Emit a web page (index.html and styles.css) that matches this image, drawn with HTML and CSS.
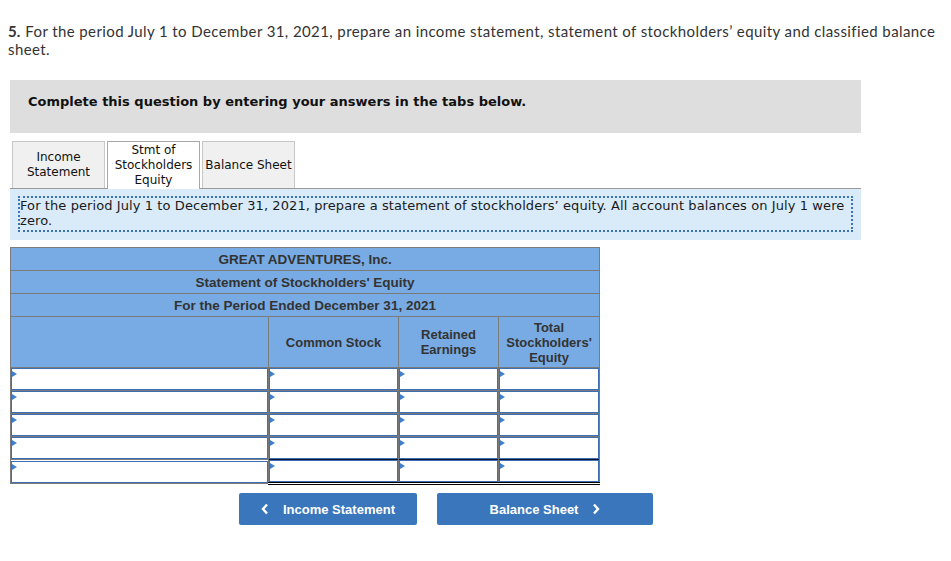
FILE: index.html
```html
<!DOCTYPE html>
<html>
<head>
<meta charset="utf-8">
<link rel="stylesheet" href="styles.css">
</head>
<body>
<div class="page">
  <p class="question"><b class="qnum">5.</b><span>For the period July 1 to December 31, 2021, prepare an income statement, statement of stockholders’ equity and classified balance</span> <span>sheet.</span></p>

  <div class="instruct">Complete this question by entering your answers in the tabs below.</div>

  <div class="tabbar">
    <div class="tab">Income<br>Statement</div>
    <div class="tab active">Stmt of<br>Stockholders<br>Equity</div>
    <div class="tab">Balance Sheet</div>
  </div>

  <div class="panel">
    <div class="prompt">For the period July 1 to December 31, 2021, prepare a statement of stockholders’ equity. All account balances on July 1 were zero.</div>
  </div>

  <table class="sheet">
    <colgroup>
      <col class="c1"><col class="c2"><col class="c3"><col class="c4">
    </colgroup>
    <tr class="title"><td colspan="4">GREAT ADVENTURES, Inc.</td></tr>
    <tr class="title"><td colspan="4">Statement of Stockholders' Equity</td></tr>
    <tr class="title"><td colspan="4">For the Period Ended December 31, 2021</td></tr>
    <tr class="colhead">
      <td></td>
      <td>Common Stock</td>
      <td>Retained<br>Earnings</td>
      <td>Total<br>Stockholders'<br>Equity</td>
    </tr>
    <tr class="row"><td><div class="in"></div></td><td><div class="in"></div></td><td><div class="in"></div></td><td><div class="in"></div></td></tr>
    <tr class="row"><td><div class="in"></div></td><td><div class="in"></div></td><td><div class="in"></div></td><td><div class="in"></div></td></tr>
    <tr class="row"><td><div class="in"></div></td><td><div class="in"></div></td><td><div class="in"></div></td><td><div class="in"></div></td></tr>
    <tr class="row"><td><div class="in"></div></td><td><div class="in"></div></td><td><div class="in"></div></td><td><div class="in"></div></td></tr>
    <tr class="row last"><td><div class="in"></div></td><td class="tot"><div class="in"></div></td><td class="tot"><div class="in"></div></td><td class="tot"><div class="in"></div></td></tr>
  </table>

  <div class="nav">
    <button class="btn prev"><svg width="8" height="12" viewBox="0 0 8 12"><polyline points="6,1.5 2,6 6,10.5" fill="none" stroke="#fff" stroke-width="2.4"/></svg><span>Income Statement</span></button>
    <button class="btn next"><span>Balance Sheet</span><svg width="8" height="12" viewBox="0 0 8 12"><polyline points="2,1.5 6,6 2,10.5" fill="none" stroke="#fff" stroke-width="2.4"/></svg></button>
  </div>
</div>
</body>
</html>
```

FILE: styles.css
```css
html, body {
  margin: 0;
  padding: 0;
  background: #fff;
}

.page {
  padding: 22px 8px 0 8px;
}

.question {
  margin: 0;
  font-family: "Lato", "Open Sans", sans-serif;
  font-size: 15px;
  line-height: 18px;
  letter-spacing: 0.4px;
  color: #333;
}

.qnum {
  font-weight: 700;
  letter-spacing: 0;
  margin-right: 5px;
}

.instruct {
  margin: 22px 0 0 2px;
  width: 851px;
  height: 53px;
  box-sizing: border-box;
  padding: 14px 18px 0 18px;
  background: #dedede;
  font-family: "DejaVu Sans", Verdana, sans-serif;
  font-weight: bold;
  font-size: 13px;
  line-height: 16px;
  color: #111;
}

.tabbar {
  margin: 8px 0 0 2px;
  width: 851px;
  padding-left: 2px;
  box-sizing: border-box;
  display: flex;
  gap: 2px;
  align-items: flex-start;
  border-bottom: 1px solid #9a9a9a;
  height: 48px;
}

.tab {
  width: 93px;
  height: 47px;
  box-sizing: border-box;
  border: 1px solid #c8c8c8;
  border-bottom: none;
  background: #f0f0f0;
  font-family: "DejaVu Sans", Verdana, sans-serif;
  font-size: 12px;
  line-height: 15px;
  color: #111;
  text-align: center;
  display: flex;
  align-items: center;
  justify-content: center;
}

.tab.active {
  height: 48px;
  background: #fff;
  border-color: #a8a8a8;
  position: relative;
  z-index: 1;
}

.panel {
  margin-left: 2px;
  width: 851px;
  box-sizing: border-box;
  background: #d9ebf9;
  padding: 7px 8px 8px 8px;
}

.prompt {
  border: 2px dotted #3b73b9;
  padding: 0 0 2px 0;
  font-family: "DejaVu Sans", Verdana, sans-serif;
  font-size: 13px;
  line-height: 15px;
  letter-spacing: 0.09px;
  color: #1a1a1a;
}

.sheet {
  margin: 7px 0 0 2px;
  border-collapse: collapse;
  table-layout: fixed;
  width: 589px;
  font-family: "Liberation Sans", Arial, sans-serif;
  font-size: 13px;
  font-weight: bold;
  color: #333;
}

.sheet col.c1 { width: 258px; }
.sheet col.c2 { width: 130px; }
.sheet col.c3 { width: 100px; }
.sheet col.c4 { width: 101px; }

.sheet td {
  border: 1px solid #7b7b7b;
  padding: 0;
  text-align: center;
}

.sheet tr.title td {
  background: #78abe3;
  height: 22px;
  font-size: 13.5px;
}

.sheet tr.colhead td {
  background: #78abe3;
  height: 50px;
  line-height: 15px;
}

.sheet tr.row td {
  background: #fff;
}

.in {
  position: relative;
  height: 20px;
  border: 1px solid #3c70b2;
  background: #fff;
}

.in::before {
  content: "";
  position: absolute;
  left: 0;
  top: 2px;
  border-left: 5px solid #3f7fcf;
  border-top: 3px solid transparent;
  border-bottom: 3px solid transparent;
}

.sheet tr.last td.tot {
  border-bottom: 3px double #000;
}

.sheet tr.last td.tot .in {
  box-shadow: 0 -1px 0 #0b1530;
}

.nav {
  margin: 8px 0 0 231px;
  display: flex;
  gap: 20px;
}

.btn {
  height: 32px;
  border: none;
  border-radius: 2px;
  background: #3a76bb;
  color: #fff;
  font-family: "Liberation Sans", Arial, sans-serif;
  font-weight: bold;
  font-size: 13px;
  display: flex;
  align-items: center;
  justify-content: center;
  gap: 14px;
  padding: 0;
}

.btn.prev { width: 178px; }
.btn.next { width: 216px; }
```
